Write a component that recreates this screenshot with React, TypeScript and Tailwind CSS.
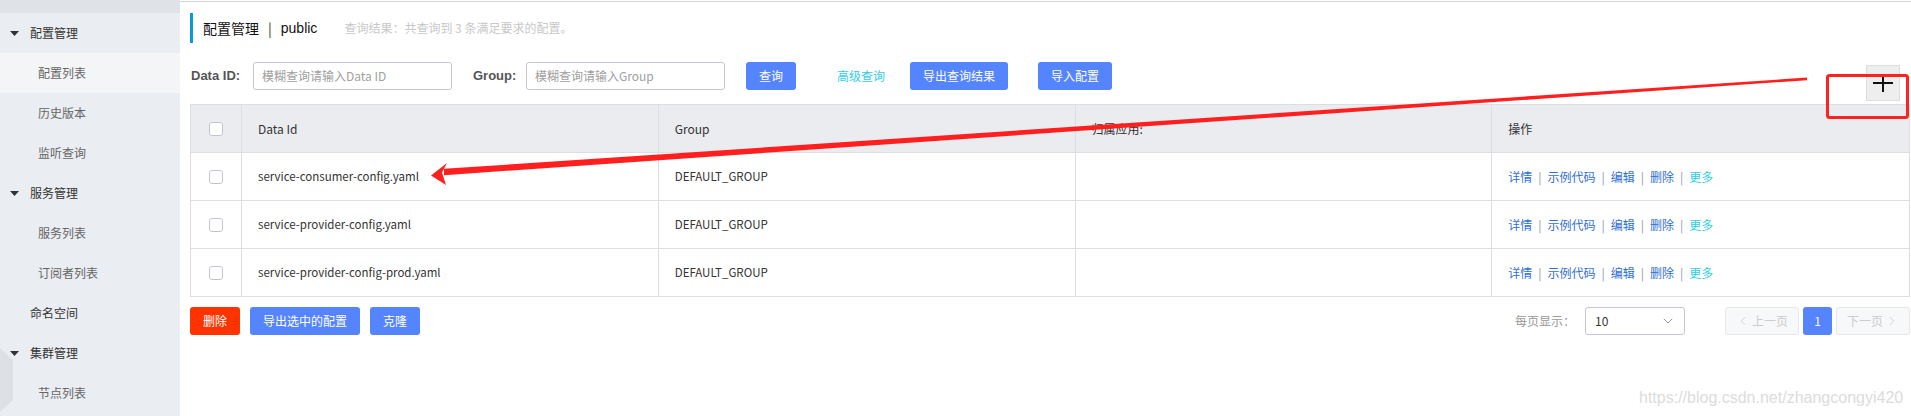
import { ChevronDown, ChevronLeft, ChevronRight } from 'lucide-react';

const cjk = "font-['Noto_Sans_CJK_SC','Noto_Sans',sans-serif]";

type NavItem = { label: string; kind: 'group' | 'item' | 'top'; active?: boolean };

const nav: NavItem[] = [
  { label: '配置管理', kind: 'group' },
  { label: '配置列表', kind: 'item', active: true },
  { label: '历史版本', kind: 'item' },
  { label: '监听查询', kind: 'item' },
  { label: '服务管理', kind: 'group' },
  { label: '服务列表', kind: 'item' },
  { label: '订阅者列表', kind: 'item' },
  { label: '命名空间', kind: 'top' },
  { label: '集群管理', kind: 'group' },
  { label: '节点列表', kind: 'item' },
];

const rows = [
  'service-consumer-config.yaml',
  'service-provider-config.yaml',
  'service-provider-config-prod.yaml',
];

function Checkbox() {
  return <span className="block w-[14px] h-[14px] rounded-[3px] border border-[#c4c6cf] bg-white" />;
}

function Sidebar() {
  return (
    <aside className="relative w-[180px] shrink-0 h-full bg-[#eaedf1]">
      <div className="h-[13px] bg-[#dfe2e7]" />
      {nav.map((n) => (
        <div
          key={n.label}
          className={
            'h-[40px] flex items-center text-[12px] ' +
            (n.active ? 'bg-[#f4f5f7] ' : '') +
            (n.kind === 'group' ? 'pl-[10px] text-[#333]' : n.kind === 'top' ? 'pl-[30px] text-[#333]' : 'pl-[38px] text-[#666]')
          }
        >
          {n.kind === 'group' && (
            <svg width="9" height="5" viewBox="0 0 9 5" className="mr-[11px]">
              <path d="M0 0h9L4.5 5z" fill="#333" />
            </svg>
          )}
          {n.label}
        </div>
      ))}
      <svg width="14" height="70" viewBox="0 0 14 70" className="absolute left-0 top-[346px]">
        <path d="M0 2 L13 14 V54 L0 66 Z" fill="#dde0e5" />
      </svg>
    </aside>
  );
}

function Btn({ children, className = '' }: { children: React.ReactNode; className?: string }) {
  return (
    <button className={'h-[28px] rounded-[3px] bg-[#5584ff] text-white text-[12px] flex items-center justify-center ' + className}>
      {children}
    </button>
  );
}

function Ops() {
  const sep = <span className="mx-[6px] text-[#8a96b0]">|</span>;
  return (
    <div className="flex items-center text-[12px] text-[#2f6fd4]">
      <span>详情</span>
      {sep}
      <span>示例代码</span>
      {sep}
      <span>编辑</span>
      {sep}
      <span>删除</span>
      {sep}
      <span className="text-[#33cde5]">更多</span>
    </div>
  );
}

export default function App() {
  return (
    <div className={'relative w-[1911px] h-[416px] overflow-hidden flex bg-white ' + cjk}>
      <Sidebar />
      <main className="flex-1 min-w-0 pl-[10px] pr-[1px]">
        <div className="h-px mt-px bg-[#d6d6d6] -ml-[10px] -mr-[1px]" />

        <div className="mt-[11px] h-[30px] flex items-center border-l-[3px] border-[#0b9ad6]">
          <span className="ml-[10px] text-[14px] text-[#111]">配置管理</span>
          <span className="mx-[9px] text-[14px] text-[#333]">|</span>
          <span className="text-[14px] text-[#111] font-['Liberation_Sans',sans-serif]">public</span>
          <span className="ml-[27px] text-[12px] text-[#c8c8c8]">查询结果：共查询到 3 条满足要求的配置。</span>
        </div>

        <div className="mt-[19px] flex items-start">
          <div className="flex items-center h-[28px]">
            <span className="ml-px w-[50px] text-[13px] font-bold text-[#555] font-['Liberation_Sans',sans-serif]">Data ID:</span>
            <div className="ml-[12px] w-[199px] h-[28px] rounded-[3px] border border-[#c4c6cf] flex items-center pl-[8px] text-[12px] text-[#a0a0a0]">
              模糊查询请输入Data ID
            </div>
            <span className="ml-[21px] w-[41px] text-[13px] font-bold text-[#555] font-['Liberation_Sans',sans-serif]">Group:</span>
            <div className="ml-[12px] w-[199px] h-[28px] rounded-[3px] border border-[#c4c6cf] flex items-center pl-[8px] text-[12px] text-[#a0a0a0]">
              模糊查询请输入Group
            </div>
            <Btn className="ml-[21px] w-[50px]">查询</Btn>
            <span className="ml-[41px] text-[12px] text-[#33cde5]">高级查询</span>
            <Btn className="ml-[25px] w-[98px]">导出查询结果</Btn>
            <Btn className="ml-[30px] w-[74px]">导入配置</Btn>
          </div>
          <div className="ml-auto mr-[10px] mt-[3px] w-[34px] h-[36px] bg-[#eeeeee] border border-[#dddddd] flex items-center justify-center">
            <svg width="20" height="20" viewBox="0 0 20 20">
              <path d="M0 10h20M10 1v18" stroke="#111" strokeWidth="2" />
            </svg>
          </div>
        </div>

        <div className="mt-[3px] border-t border-l border-r border-[#dcdee3] text-[12px] text-[#333]">
          <div className="grid grid-cols-[51px_1fr_1fr_1fr_1fr] h-[48px] bg-[#ebecf0] border-b border-[#dcdee3]">
            <div className="flex items-center justify-center border-r border-[#dcdee3]">
              <Checkbox />
            </div>
            <div className="flex items-center pl-[16px] border-r border-[#dcdee3]">Data Id</div>
            <div className="flex items-center pl-[16px] border-r border-[#dcdee3]">Group</div>
            <div className="flex items-center pl-[16px] border-r border-[#dcdee3]">归属应用:</div>
            <div className="flex items-center pl-[16px]">操作</div>
          </div>
          {rows.map((r) => (
            <div key={r} className="grid grid-cols-[51px_1fr_1fr_1fr_1fr] h-[48px] border-b border-[#dcdee3]">
              <div className="flex items-center justify-center border-r border-[#dcdee3]">
                <Checkbox />
              </div>
              <div className="flex items-center pl-[16px] border-r border-[#dcdee3] text-[11.5px]">{r}</div>
              <div className="flex items-center pl-[16px] border-r border-[#dcdee3] text-[11.5px]">DEFAULT_GROUP</div>
              <div className="border-r border-[#dcdee3]" />
              <div className="flex items-center pl-[16px]">
                <Ops />
              </div>
            </div>
          ))}
        </div>

        <div className="mt-[10px] flex items-center h-[28px]">
          <Btn className="w-[50px] bg-[#ff3300]">删除</Btn>
          <Btn className="ml-[10px] w-[110px]">导出选中的配置</Btn>
          <Btn className="ml-[10px] w-[50px]">克隆</Btn>
          <span className="ml-auto text-[12px] text-[#999]">每页显示：</span>
          <div className="ml-[10px] w-[100px] h-[28px] rounded-[3px] border border-[#c4c6cf] flex items-center justify-between pl-[9px] pr-[8px] text-[12px] text-[#333]">
            <span>10</span>
            <ChevronDown size={16} strokeWidth={1.5} color="#999" />
          </div>
          <div className="ml-[40px] w-[74px] h-[28px] rounded-[3px] border border-[#e6e7eb] bg-[#f7f8fa] flex items-center justify-center text-[12px] text-[#ccc]">
            <ChevronLeft size={14} strokeWidth={1.5} className="mr-[2px]" />
            上一页
          </div>
          <div className="ml-[4px] w-[29px] h-[28px] rounded-[3px] bg-[#5584ff] flex items-center justify-center text-[12px] text-white">1</div>
          <div className="ml-[4px] w-[74px] h-[28px] rounded-[3px] border border-[#e6e7eb] bg-[#f7f8fa] flex items-center justify-center text-[12px] text-[#ccc]">
            下一页
            <ChevronRight size={14} strokeWidth={1.5} className="ml-[2px]" />
          </div>
        </div>
      </main>

      <span className="absolute left-[1639px] top-[388px] text-[16px] leading-[20px] text-[#dcdcdc] font-['Liberation_Sans',sans-serif]">
        https://blog.csdn.net/zhangcongyi420
      </span>

      <svg className="absolute inset-0 pointer-events-none" width="1911" height="416" viewBox="0 0 1911 416">
        <rect x="1827.5" y="75.5" width="80" height="42" rx="2" fill="none" stroke="#ff2222" strokeWidth="3" />
        <polygon points="1807,77.6 1807,80.2 444,175.2 444,168.8" fill="#ff1f1f" />
        <polygon points="431,175.5 447,163 442,172.5 446,185" fill="#ff1f1f" />
      </svg>
    </div>
  );
}
